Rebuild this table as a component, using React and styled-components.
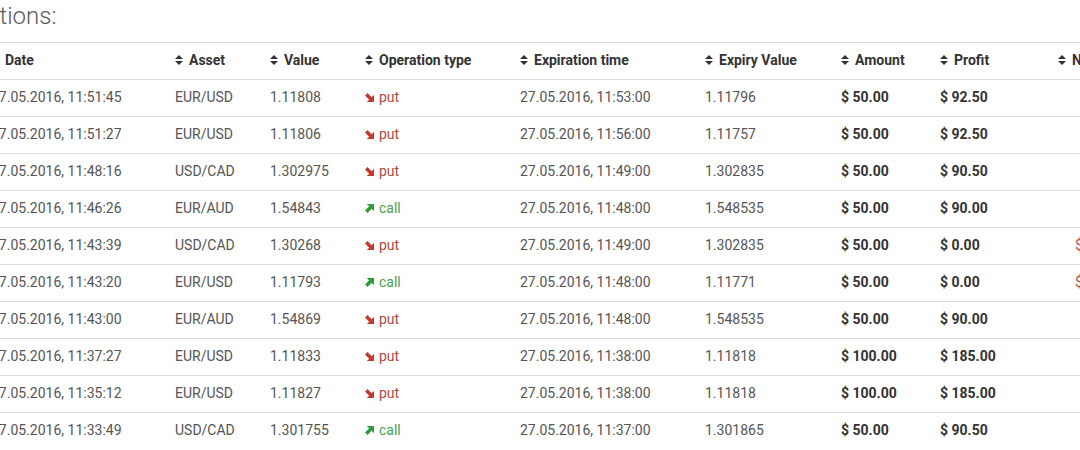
import React from "react";
import styled, { createGlobalStyle } from "styled-components";

const GlobalStyle = createGlobalStyle`
  html, body { margin: 0; padding: 0; background: #fff; }
  body { font-family: Roboto, "Liberation Sans", sans-serif; overflow: hidden; }
`;

const Page = styled.div`
  width: 1080px;
  height: 450px;
  overflow: hidden;
  background: #fff;
`;

const Heading = styled.h2`
  margin: 0 0 11px -63px;
  padding-top: 1px;
  font-family: Roboto, "Liberation Sans", sans-serif;
  font-weight: 300;
  font-size: 24px;
  line-height: 30px;
  color: #5a5a5a;
  white-space: nowrap;
`;

const Table = styled.table`
  margin-left: -17px;
  border-collapse: collapse;
  border-spacing: 0;
  table-layout: fixed;
  width: 1217px;
  font-size: 14px;
  line-height: 20px;
  color: #555;
`;

const Th = styled.th`
  box-sizing: border-box;
  width: ${(p) => p.$w}px;
  height: 37px;
  padding: 7px 8px 9px;
  text-align: left;
  font-weight: 700;
  color: #333;
  border-top: 1px solid #ddd;
  white-space: nowrap;
`;

const Td = styled.td`
  box-sizing: border-box;
  height: 37px;
  padding: 7px 8px 9px;
  border-top: 1px solid #ddd;
  white-space: nowrap;
  font-weight: ${(p) => (p.$bold ? 700 : 400)};
  color: ${(p) => (p.$bold ? "#333" : "#555")};
`;

const SortIcon = styled.svg`
  display: inline-block;
  width: 8px;
  height: 12px;
  margin-right: 6px;
  vertical-align: middle;
  position: relative;
  top: -1px;
  fill: #333;
`;

const OpType = styled.span`
  color: ${(p) => (p.$kind === "put" ? "#ad4a40" : "#4a9f4a")};
`;

const ArrowIcon = styled.svg`
  display: inline-block;
  width: 9px;
  height: 9px;
  margin-right: 5px;
  vertical-align: middle;
  position: relative;
  top: -1px;
  fill: ${(p) => (p.$kind === "put" ? "#c23b2e" : "#2f9c3a")};
`;

const Loss = styled.span`
  padding-left: 17px;
  color: #b0544a;
`;

const Sort = () => (
  <SortIcon viewBox="0 0 8 12">
    <polygon points="0,5 4,1 8,5" />
    <polygon points="0,7 8,7 4,11" />
  </SortIcon>
);

const Arrow = ({ kind }) => (
  <ArrowIcon $kind={kind} viewBox="0 0 10 10">
    {kind === "put" ? (
      <polygon points="10,2 10,10 2,10 4.6,7.4 0,2.8 2.8,0 7.4,4.6" />
    ) : (
      <polygon points="10,8 10,0 2,0 4.6,2.6 0,7.2 2.8,10 7.4,5.4" />
    )}
  </ArrowIcon>
);

const columns = [
  ["Date", 184],
  ["Asset", 95],
  ["Value", 95],
  ["Operation type", 155],
  ["Expiration time", 185],
  ["Expiry Value", 136],
  ["Amount", 99],
  ["Profit", 118],
  ["Net result", 150],
];

const rows = [
  ["27.05.2016, 11:51:45", "EUR/USD", "1.11808", "put", "27.05.2016, 11:53:00", "1.11796", "50.00", "92.50", null],
  ["27.05.2016, 11:51:27", "EUR/USD", "1.11806", "put", "27.05.2016, 11:56:00", "1.11757", "50.00", "92.50", null],
  ["27.05.2016, 11:48:16", "USD/CAD", "1.302975", "put", "27.05.2016, 11:49:00", "1.302835", "50.00", "90.50", null],
  ["27.05.2016, 11:46:26", "EUR/AUD", "1.54843", "call", "27.05.2016, 11:48:00", "1.548535", "50.00", "90.00", null],
  ["27.05.2016, 11:43:39", "USD/CAD", "1.30268", "put", "27.05.2016, 11:49:00", "1.302835", "50.00", "0.00", "$ -50.00"],
  ["27.05.2016, 11:43:20", "EUR/USD", "1.11793", "call", "27.05.2016, 11:48:00", "1.11771", "50.00", "0.00", "$ -50.00"],
  ["27.05.2016, 11:43:00", "EUR/AUD", "1.54869", "put", "27.05.2016, 11:48:00", "1.548535", "50.00", "90.00", null],
  ["27.05.2016, 11:37:27", "EUR/USD", "1.11833", "put", "27.05.2016, 11:38:00", "1.11818", "100.00", "185.00", null],
  ["27.05.2016, 11:35:12", "EUR/USD", "1.11827", "put", "27.05.2016, 11:38:00", "1.11818", "100.00", "185.00", null],
  ["27.05.2016, 11:33:49", "USD/CAD", "1.301755", "call", "27.05.2016, 11:37:00", "1.301865", "50.00", "90.50", null],
];

export default function App() {
  return (
    <Page>
      <GlobalStyle />
      <Heading>Operations:</Heading>
      <Table>
        <thead>
          <tr>
            {columns.map(([name, w]) => (
              <Th key={name} $w={w}>
                <Sort />
                {name}
              </Th>
            ))}
          </tr>
        </thead>
        <tbody>
          {rows.map((r, i) => (
            <tr key={i}>
              <Td>{r[0]}</Td>
              <Td>{r[1]}</Td>
              <Td>{r[2]}</Td>
              <Td>
                <OpType $kind={r[3]}>
                  <Arrow kind={r[3]} />
                  {r[3]}
                </OpType>
              </Td>
              <Td>{r[4]}</Td>
              <Td>{r[5]}</Td>
              <Td $bold>$ {r[6]}</Td>
              <Td $bold>$ {r[7]}</Td>
              <Td>{r[8] && <Loss>{r[8]}</Loss>}</Td>
            </tr>
          ))}
        </tbody>
      </Table>
    </Page>
  );
}
